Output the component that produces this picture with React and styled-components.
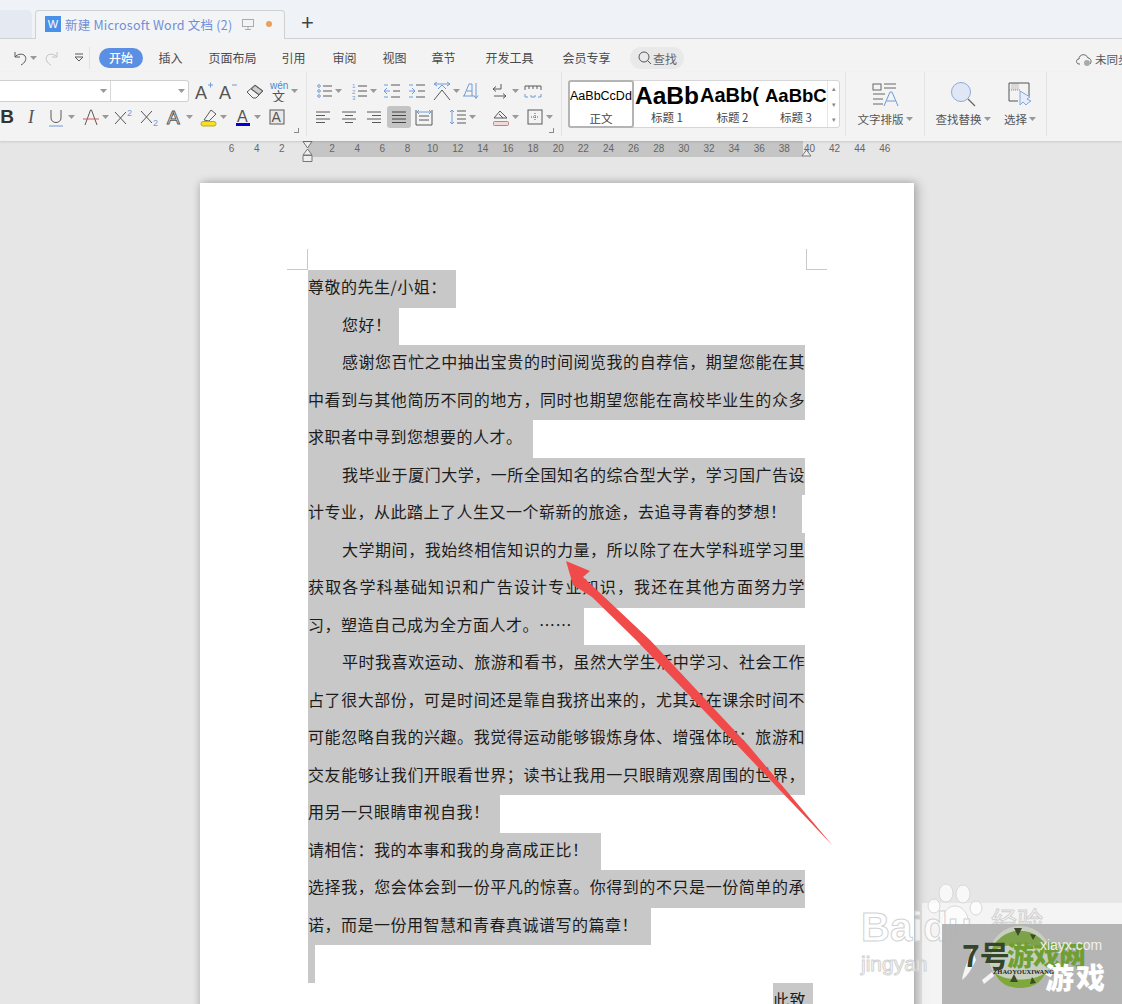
import React from "react";
import styled, { createGlobalStyle } from "styled-components";

const GlobalStyle = createGlobalStyle`
  html, body { margin: 0; padding: 0; height: 100%; overflow: hidden; }
  body { font-family: "Noto Sans CJK SC", "Liberation Sans", sans-serif; }
`;

const Window = styled.div`
  position: relative;
  width: 1122px;
  height: 1004px;
  overflow: hidden;
  background: #e6e6e6;
  display: flex;
  flex-direction: column;
`;

/* tab bar */
const TabBar = styled.div`
  height: 39px;
  flex: none;
  box-sizing: border-box;
  background: #eff2f7;
  border-bottom: 1px solid #cfd0d2;
  display: flex;
  align-items: flex-end;
`;
const OldTab = styled.div`
  width: 32px;
  height: 28px;
  background: #e4e9f2;
  border-top-right-radius: 5px;
`;
const Tab = styled.div`
  width: 250px;
  height: 29px;
  margin-left: 3px;
  margin-bottom: -1px;
  box-sizing: border-box;
  padding: 0 0 2px 9px;
  background: #f3f4f6;
  border: 1px solid #cfd0d2;
  border-bottom: none;
  border-radius: 4px 4px 0 0;
  display: flex;
  align-items: center;
`;
const WordMark = styled.div`
  width: 16px;
  height: 16px;
  background: #4a90e8;
  color: #fff;
  font: 11px/16px "Liberation Sans", sans-serif;
  text-align: center;
`;
const TabTitle = styled.span`
  margin-left: 4px;
  width: 176px;
  font-size: 12.5px;
  letter-spacing: 0.22px;
  color: #6f8fd6;
  white-space: nowrap;
`;
const Dot = styled.span`
  width: 6px;
  height: 6px;
  margin-left: 11px;
  border-radius: 50%;
  background: #e8a05c;
`;
const Plus = styled.div`
  margin-left: 16px;
  margin-bottom: 3px;
  font: 22px/24px "Liberation Sans", sans-serif;
  color: #444;
`;

/* menu bar */
const MenuBar = styled.div`
  height: 33px;
  flex: none;
  box-sizing: border-box;
  padding-top: 5px;
  background: #f3f3f3;
  display: flex;
  align-items: center;
  position: relative;
`;
const MenuItem = styled.div`
  width: ${(p) => p.$w}px;
  margin-left: ${(p) => p.$ml || 0}px;
  flex: none;
  font-size: 12px;
  line-height: 20px;
  text-align: center;
  white-space: nowrap;
  color: ${(p) => (p.$active ? "#fff" : "#4a4a4a")};
  background: ${(p) => (p.$active ? "#5a8fe4" : "transparent")};
  border-radius: 10px;
  font-weight: ${(p) => (p.$active ? 500 : 400)};
`;
const SearchPill = styled.div`
  width: 54px;
  height: 22px;
  border-radius: 11px;
  background: #e9e9e9;
  display: flex;
  align-items: center;
  justify-content: center;
  font-size: 12px;
  color: #666;
`;
const SyncState = styled.div`
  position: absolute;
  left: 1075px;
  top: 11px;
  display: flex;
  align-items: center;
  gap: 2px;
  font-size: 11.5px;
  line-height: 18px;
  color: #555;
  white-space: nowrap;
`;
const MenuSep = styled.div`
  width: 1px;
  height: 22px;
  background: #e2e2e2;
`;

/* toolbar */
const Toolbar = styled.div`
  height: 69px;
  flex: none;
  background: #f3f3f3;
  display: flex;
  box-shadow: 0 1px 2px rgba(0, 0, 0, 0.12);
  position: relative;
  z-index: 1;
`;
const Group = styled.div`
  position: relative;
  width: ${(p) => p.$w}px;
  flex: none;
  box-sizing: border-box;
  padding-top: 8px;
  border-right: 1px solid #e3e3e3;
  margin-bottom: 5px;
`;
const Row = styled.div`
  height: 22px;
  display: flex;
  align-items: center;
  margin-bottom: 4px;
`;
const Slot = styled.div`
  width: ${(p) => p.$w}px;
  height: 22px;
  flex: none;
  margin-left: ${(p) => p.$ml || 0}px;
  display: flex;
  align-items: center;
  justify-content: center;
  border-radius: 3px;
  background: ${(p) => (p.$active ? "#c4c4c4" : "transparent")};
`;
const Launcher = styled.div`
  position: absolute;
  right: 7px;
  bottom: 3px;
  width: 4px;
  height: 4px;
  border-right: 1px solid #888;
  border-bottom: 1px solid #888;
`;
const FontBox = styled.div`
  width: 189px;
  height: 22px;
  flex: none;
  box-sizing: border-box;
  background: #fff;
  border: 1px solid #d0d0d0;
  border-left: none;
  border-radius: 0 3px 3px 0;
  display: flex;
`;
const FontCell = styled.div`
  width: ${(p) => p.$w}px;
  box-sizing: border-box;
  border-right: ${(p) => (p.$line ? "1px solid #d8d8d8" : "none")};
  display: flex;
  align-items: center;
  justify-content: flex-end;
  padding-right: 3px;
`;
const Gallery = styled.div`
  margin-left: 6px;
  width: 272px;
  height: 48px;
  box-sizing: border-box;
  display: flex;
  background: #fff;
  border: 1px solid #d6d6d6;
  border-radius: 3px;
`;
const StyleCard = styled.div`
  width: ${(p) => p.$w}px;
  flex: none;
  box-sizing: border-box;
  overflow: hidden;
  border: ${(p) => (p.$active ? "2px solid #b4b4b4" : "none")};
  border-radius: 3px;
  margin: ${(p) => (p.$active ? "-1px 0 -1px -1px" : "0")};
  display: flex;
  flex-direction: column;
  align-items: center;
`;
const Sample = styled.div`
  align-self: flex-start;
  padding-left: ${(p) => p.$pad || 0}px;
  height: 29px;
  line-height: 29px;
  font-family: "Liberation Sans", sans-serif;
  font-size: ${(p) => p.$size}px;
  font-weight: ${(p) => (p.$bold ? 700 : 400)};
  color: #000;
  white-space: nowrap;
`;
const StyleName = styled.div`
  font-size: 11.5px;
  line-height: 15px;
  color: #444;
  white-space: nowrap;
`;
const Scroller = styled.div`
  margin-left: auto;
  width: 12px;
  border-left: 1px solid #e6e6e6;
  display: flex;
  flex-direction: column;
  justify-content: space-between;
  align-items: center;
  color: #888;
  font: 7px/15px "Liberation Sans", sans-serif;
`;
const BigTool = styled.div`
  width: ${(p) => p.$w}px;
  flex: none;
  display: flex;
  flex-direction: column;
  align-items: center;
`;
const BigIcon = styled.div`
  height: 30px;
  display: flex;
  align-items: center;
  margin-bottom: 1px;
`;
const BigLabel = styled.div`
  font-size: 11.5px;
  line-height: 16px;
  color: #555;
  white-space: nowrap;
  display: flex;
  align-items: center;
  gap: 2px;
`;
const BigRow = styled.div`
  display: flex;
`;
const BoldB = styled.span`
  font: 700 19px/22px "Liberation Sans", sans-serif;
  color: #333;
`;
const ItalicI = styled.span`
  font: italic 400 18px/22px "Liberation Serif", serif;
  color: #555;
`;

/* ruler */
const Ruler = styled.div`
  position: relative;
  height: 16px;
  flex: none;
  box-sizing: border-box;
  padding-left: 219px;
  display: flex;
  background: linear-gradient(
    to right,
    transparent 308px,
    #c5c5c5 308px,
    #c5c5c5 803px,
    transparent 803px
  );
`;
const Tick = styled.div`
  width: 25.14px;
  flex: none;
  text-align: center;
  font: 10px/16px "Liberation Sans", sans-serif;
  color: #666;
`;
const Marker = styled.svg`
  position: absolute;
  left: ${(p) => p.$left}px;
  top: ${(p) => p.$top}px;
`;

/* document */
const Page = styled.div`
  position: relative;
  margin: 26px 0 0 200px;
  width: 714px;
  flex: none;
  box-sizing: border-box;
  padding: 87px 0 0 108px;
  background: #fff;
  box-shadow: 0 0 8px rgba(0, 0, 0, 0.25), 6px 0 10px rgba(0, 0, 0, 0.12);
`;
const Crop = styled.div`
  position: absolute;
  left: ${(p) => p.$x}px;
  top: ${(p) => p.$y}px;
  width: ${(p) => p.$w}px;
  height: ${(p) => p.$h}px;
  background: #c9c9c9;
`;
const Line = styled.div`
  width: ${(p) => p.$w}px;
  margin-left: ${(p) => p.$ml || 0}px;
  height: 37.5px;
  box-sizing: border-box;
  padding-left: ${(p) => p.$indent || 0}px;
  background: #c8c8c8;
  font-size: 16px;
  letter-spacing: 0.5px;
  line-height: 33px;
  color: #1c1c1c;
  white-space: nowrap;
  text-align: ${(p) => (p.$justify ? "justify" : "left")};
  text-align-last: ${(p) => (p.$justify ? "justify" : "left")};
`;

/* stuff laid over the screenshot */
const Arrow = styled.svg`
  position: absolute;
  left: 0;
  top: 0;
  z-index: 3;
`;
const PaleBox = styled.div`
  position: absolute;
  left: 922px;
  top: 903px;
  width: 200px;
  height: 101px;
  background: rgba(255, 255, 255, 0.55);
  z-index: 2;
`;
const GrayBox = styled.div`
  position: absolute;
  left: 942px;
  top: 924px;
  width: 180px;
  height: 80px;
  background: rgba(178, 178, 178, 0.96);
  z-index: 2;
`;
const Paw = styled.svg`
  position: absolute;
  left: 925px;
  top: 880px;
  z-index: 2;
`;
const BaiduWord = styled.div`
  position: absolute;
  left: 861px;
  top: ${(p) => p.$top}px;
  z-index: 2;
  font-family: "Liberation Sans", sans-serif;
  font-size: ${(p) => p.$size}px;
  font-weight: ${(p) => (p.$bold ? 700 : 400)};
  line-height: 1;
  color: rgba(255, 255, 255, 0.7);
  -webkit-text-stroke: 1px #d2d2d2;
`;
const Jing = styled.div`
  position: absolute;
  left: 991px;
  top: 905px;
  z-index: 2;
  font-size: 26px;
  line-height: 30px;
  color: rgba(255, 255, 255, 0.8);
  -webkit-text-stroke: 1px #d0d0d0;
`;
const LogoMark = styled.svg`
  position: absolute;
  left: 960px;
  top: 920px;
  z-index: 5;
`;
const SevenHao = styled.div`
  position: absolute;
  left: 962px;
  top: 936px;
  z-index: 6;
  font-size: 30px;
  line-height: 36px;
  font-weight: 700;
  color: #35452c;
`;
const GreenWord = styled.div`
  position: absolute;
  left: 1007px;
  top: 940px;
  z-index: 6;
  font-size: 27px;
  line-height: 30px;
  font-weight: 900;
  letter-spacing: -1px;
  color: #6f9f33;
`;
const SiteName = styled.div`
  position: absolute;
  left: 1040px;
  top: 937px;
  z-index: 7;
  font: 14px/16px "Liberation Sans", sans-serif;
  color: #eef1ea;
`;
const SmallLatin = styled.div`
  position: absolute;
  left: 993px;
  top: 968px;
  z-index: 7;
  font: 700 6.5px/8px "Liberation Serif", serif;
  color: #222;
  white-space: nowrap;
`;
const WhiteGame = styled.div`
  position: absolute;
  left: 1045px;
  top: 959px;
  z-index: 6;
  font-size: 29px;
  line-height: 34px;
  font-weight: 900;
  letter-spacing: 2px;
  color: #fff;
`;

const Svg = ({ w = 20, h = 20, children, stroke = "#5a5a5a" }) => (
  <svg width={w} height={h} viewBox={`0 0 ${w} ${h}`} fill="none" stroke={stroke} strokeWidth="1" overflow="visible">
    {children}
  </svg>
);

const Letter = ({ x = 3, y = 17, size = 19, color = "#555" }) => (
  <text x={x} y={y} fontSize={size} fontFamily="Liberation Sans" fill={color} stroke="none">
    A
  </text>
);

const blue = "#6f9bd8";

const icons = {
  caret: (
    <svg width="7" height="4">
      <path d="M0 0h7L3.5 4z" fill="#999" />
    </svg>
  ),
  undo: (
    <Svg>
      <path d="M5 4v5h5M5 9c2-3 8-4 10-1 2 3 0 7-4 9" />
    </Svg>
  ),
  redo: (
    <Svg stroke="#c4c4c4">
      <path d="M15 4v5h-5M15 9c-2-3-8-4-10-1-2 3 0 7 4 9" />
    </Svg>
  ),
  quick: (
    <Svg>
      <path d="M6 6h8M6 9l4 4 4-4z" />
    </Svg>
  ),
  aplus: (
    <Svg>
      <Letter x={1} y={18} size={18} />
      <path d="M14 4h5M16.5 1.5v5" stroke={blue} />
    </Svg>
  ),
  aminus: (
    <Svg>
      <Letter x={1} y={18} size={18} />
      <path d="M14 4h5" stroke={blue} />
    </Svg>
  ),
  eraser: (
    <Svg>
      <path d="M2 11l8-7 8 6-7 7h-3zM6 8l8 6" />
      <path d="M6.5 8 10 4.5 17.5 10 14 13.5z" fill="#cfcfcf" />
    </Svg>
  ),
  wen: (
    <svg width="20" height="22" viewBox="0 0 20 22">
      <text x="1" y="9" fontSize="10" fill="#4a86d8" fontFamily="Liberation Sans">
        wén
      </text>
      <text x="3" y="21" fontSize="13" fill="#555" fontFamily="Noto Sans CJK SC">
        文
      </text>
    </svg>
  ),
  u: (
    <Svg>
      <path d="M5 3v8c0 6 10 6 10 0V3" />
      <path d="M3 19h14" stroke={blue} />
    </Svg>
  ),
  strike: (
    <Svg>
      <path d="M4 18 9.5 3h1L16 18" />
      <path d="M2 12h16" stroke="#d85a5a" />
    </Svg>
  ),
  sup: (
    <svg width="22" height="20">
      <path d="M2 5l11 12M13 5 2 17" stroke="#555" fill="none" />
      <text x="14" y="9" fontSize="9" fill={blue} fontFamily="Liberation Sans">
        2
      </text>
    </svg>
  ),
  sub: (
    <svg width="22" height="20">
      <path d="M2 4l11 12M13 4 2 16" stroke="#555" fill="none" />
      <text x="14" y="19" fontSize="9" fill={blue} fontFamily="Liberation Sans">
        2
      </text>
    </svg>
  ),
  outline: (
    <Svg>
      <text x="2" y="17" fontSize="19" fontFamily="Liberation Sans" fill="#fff" stroke="#555" strokeWidth=".9">
        A
      </text>
    </Svg>
  ),
  marker: (
    <Svg>
      <path d="M5 13 12 3l5 4-7 7z" />
      <rect x="2" y="14.5" width="15" height="4.5" rx="2" fill="#f5e11f" stroke="#b9a92a" />
    </Svg>
  ),
  colorA: (
    <Svg>
      <Letter x={4} y={15} size={16} />
      <rect x="3" y="16" width="14" height="3" fill="#0000d0" stroke="none" />
    </Svg>
  ),
  boxA: (
    <Svg>
      <rect x="3" y="3" width="14" height="14" fill="#e9e9e9" />
      <Letter x={4.5} y={15} size={14} />
    </Svg>
  ),
  bullets: (
    <Svg>
      <circle cx="4" cy="5" r="1.3" stroke={blue} />
      <circle cx="4" cy="10" r="1.3" stroke={blue} />
      <circle cx="4" cy="15" r="1.3" stroke={blue} />
      <path d="M8 5h9M8 10h9M8 15h9" />
    </Svg>
  ),
  numbers: (
    <svg width="20" height="20">
      <text x="2" y="7" fontSize="6" fill={blue} fontFamily="Liberation Sans">1</text>
      <text x="2" y="13" fontSize="6" fill={blue} fontFamily="Liberation Sans">2</text>
      <text x="2" y="19" fontSize="6" fill={blue} fontFamily="Liberation Sans">3</text>
      <path d="M8 5h9M8 10h9M8 15h9" stroke="#555" />
    </svg>
  ),
  outdent: (
    <Svg>
      <path d="M9 4h9M9 16h9M11 10h7" />
      <path d="M8 10H2M5 7l-3 3 3 3" stroke={blue} />
      <path d="M2 4h4M2 16h4" stroke={blue} />
    </Svg>
  ),
  indent: (
    <Svg>
      <path d="M9 4h9M9 16h9M11 10h7" />
      <path d="M2 10h6M5 7l3 3-3 3" stroke={blue} />
      <path d="M2 4h4M2 16h4" stroke={blue} />
    </Svg>
  ),
  spread: (
    <Svg>
      <path d="M2 19 10 9l8 10" />
      <path d="M2 3h16M5 1 2 3l3 2M15 1l3 2-3 2M10 4l-4 4M10 4l4 4" stroke={blue} />
    </Svg>
  ),
  sort: (
    <Svg>
      <path d="M3 15h11M4 15 9 3h3v12M6.5 10H12" stroke={blue} />
      <path d="M16 2v15M14 14.5l2 3 2-3" stroke={blue} />
    </Svg>
  ),
  enter: (
    <Svg>
      <path d="M3 8h8V3" />
      <path d="M3 8l3-2.5M3 8l3 2.5" />
      <path d="M4 15h12M13 12.5l3 2.5-3 2.5" />
    </Svg>
  ),
  tabs: (
    <Svg>
      <path d="M2 5h16M2 5v4M6 5v3M10 5v3M14 5v3M18 5v4" />
      <path d="M2 13v3h3M18 13v3h-3M8 14v2h4v-2" stroke={blue} />
    </Svg>
  ),
  left: (
    <Svg>
      <path d="M3 5h14M3 8.5h9M3 12h14M3 15.5h9" />
    </Svg>
  ),
  center: (
    <Svg>
      <path d="M3 5h14M6 8.5h8M3 12h14M6 15.5h8" />
    </Svg>
  ),
  right: (
    <Svg>
      <path d="M3 5h14M8 8.5h9M3 12h14M8 15.5h9" />
    </Svg>
  ),
  justify: (
    <Svg stroke="#444">
      <path d="M3 5h14M3 8.5h14M3 12h14M3 15.5h14" />
    </Svg>
  ),
  distribute: (
    <Svg>
      <path d="M2 3v15M18 3v15M2 18h16M5 9h10M5 13h10" />
      <path d="M3 5h14M5 3 3 5l2 2M15 3l2 2-2 2" stroke={blue} />
    </Svg>
  ),
  spacing: (
    <Svg>
      <path d="M4 3v14M2 5l2-2 2 2M2 15l2 2 2-2" stroke={blue} />
      <path d="M9 4h9M9 8h9M9 12h9M9 16h9" />
    </Svg>
  ),
  shade: (
    <Svg>
      <path d="M3 11l6-7 7 7H3zM8 7l4 4" />
      <rect x="2.5" y="14.5" width="15" height="4" rx="1" stroke="#d07a7a" fill="#efd9d9" />
    </Svg>
  ),
  borders: (
    <Svg>
      <rect x="3" y="3" width="14" height="14" />
      <path d="M10 6v8M6 10h8" strokeDasharray="1 1" />
    </Svg>
  ),
  layout: (
    <svg width="28" height="28" viewBox="0 0 28 28" fill="none" stroke="#666">
      <rect x="2" y="3" width="8" height="6" />
      <path d="M13 3h12M13 7h12M2 13h12M2 18h10M2 23h10" />
      <path d="M13 25 19 11h2l6 14M15.5 20h9" stroke={blue} />
    </svg>
  ),
  search: (
    <svg width="30" height="30" viewBox="0 0 30 30" fill="none">
      <circle cx="13" cy="12" r="9.5" fill="#dfe7f6" stroke="#8fa9d6" />
      <path d="M20 19l7 7" stroke="#666" strokeWidth="1.2" />
    </svg>
  ),
  select: (
    <svg width="26" height="28" viewBox="0 0 26 28" fill="none">
      <rect x="4" y="2" width="8" height="7" fill="#d9d9d9" />
      <path d="M13 2h9V15M11 20H2V2h11" stroke="#555" />
      <path d="M2 9h11" stroke="#888" strokeDasharray="1 1" />
      <path d="M13 10v14l3-3 3 3 2-2 3-2-4-2 3-2z" fill="#e6edf8" stroke="#86a6d6" />
    </svg>
  ),
};

const glyph = (name) => {
  if (name === "bold") return <BoldB>B</BoldB>;
  if (name === "italic") return <ItalicI>I</ItalicI>;
  return icons[name];
};

// items are [center x inside the group, icon, active?]; start is where the row is already filled to
const ToolSlots = ({ items, start = 0 }) => {
  let cursor = start;
  return items.map(([center, name, active], i) => {
    const w = name === "caret" ? 7 : active ? 24 : 20;
    const ml = center - w / 2 - cursor;
    cursor = center + w / 2;
    return (
      <Slot key={i} $w={w} $ml={ml} $active={active}>
        {glyph(name)}
      </Slot>
    );
  });
};

const rowFormat = [
  [7, "bold"], [31, "italic"], [56, "u"], [71, "caret"], [91, "strike"], [105, "caret"],
  [123, "sup"], [149, "sub"], [175, "outline"], [189, "caret"], [209, "marker"], [223, "caret"],
  [243, "colorA"], [257, "caret"], [277, "boxA"],
];
const rowFontTools = [[204, "aplus"], [228, "aminus"], [255, "eraser"], [279, "wen"], [294, "caret"]];
const rowLists = [
  [18, "bullets"], [31, "caret"], [53, "numbers"], [66, "caret"], [85, "outdent"], [110, "indent"],
  [135, "spread"], [149, "caret"], [163, "sort"], [193, "enter"], [208, "caret"], [226, "tabs"],
];
const rowAlign = [
  [16, "left"], [42, "center"], [67, "right"], [92, "justify", true], [117, "distribute"],
  [151, "spacing"], [165, "caret"], [194, "shade"], [208, "caret"], [228, "borders"], [242, "caret"],
];

const rulerNumbers = [6, 4, 2, "", 2, 4, 6, 8, 10, 12, 14, 16, 18, 20, 22, 24, 26, 28, 30, 32, 34, 36, 38, 40, 42, 44, 46];

// the letter is set with full-width punctuation
const fullWidth = (s) =>
  s.replace(/,/g, "\uFF0C").replace(/:/g, "\uFF1A").replace(/;/g, "\uFF1B").replace(/!/g, "\uFF01");

const lines = [
  { w: 148, t: "尊敬的先生/小姐:" },
  { w: 91, i: 34, t: "您好!" },
  { w: 497, i: 34, j: 1, t: "感谢您百忙之中抽出宝贵的时间阅览我的自荐信,期望您能在其" },
  { w: 497, j: 1, t: "中看到与其他简历不同的地方,同时也期望您能在高校毕业生的众多" },
  { w: 225, t: "求职者中寻到您想要的人才。" },
  { w: 497, i: 34, j: 1, t: "我毕业于厦门大学,一所全国知名的综合型大学,学习国广告设" },
  { w: 494, t: "计专业,从此踏上了人生又一个崭新的旅途,去追寻青春的梦想!" },
  { w: 497, i: 34, j: 1, t: "大学期间,我始终相信知识的力量,所以除了在大学科班学习里" },
  { w: 497, j: 1, t: "获取各学科基础知识和广告设计专业知识,我还在其他方面努力学" },
  { w: 276, t: "习,塑造自己成为全方面人才。……" },
  { w: 497, i: 34, j: 1, t: "平时我喜欢运动、旅游和看书,虽然大学生活中学习、社会工作" },
  { w: 497, j: 1, t: "占了很大部份,可是时间还是靠自我挤出来的,尤其是在课余时间不" },
  { w: 497, j: 1, t: "可能忽略自我的兴趣。我觉得运动能够锻炼身体、增强体魄;旅游和" },
  { w: 497, j: 1, t: "交友能够让我们开眼看世界;读书让我用一只眼睛观察周围的世界," },
  { w: 192, t: "用另一只眼睛审视自我!" },
  { w: 293, t: "请相信:我的本事和我的身高成正比!" },
  { w: 497, j: 1, t: "选择我,您会体会到一份平凡的惊喜。你得到的不只是一份简单的承" },
  { w: 343, t: "诺,而是一份用智慧和青春真诚谱写的篇章!" },
  { w: 7, t: "" },
  { w: 40, ml: 465, t: "此致" },
];

export default function App() {
  return (
    <Window lang="zh-CN">
      <GlobalStyle />
      <TabBar>
        <OldTab />
        <Tab>
          <WordMark>W</WordMark>
          <TabTitle>新建 Microsoft Word 文档 (2)</TabTitle>
          <svg width="14" height="14" viewBox="0 0 14 14" fill="none" stroke="#aaa">
            <rect x="1.5" y="2.5" width="11" height="7" />
            <path d="M7 10v2M4 12.5h6" />
          </svg>
          <Dot />
        </Tab>
        <Plus>+</Plus>
      </TabBar>

      <MenuBar>
        <Slot $w={20} $ml={10}>{icons.undo}</Slot>
        <Slot $w={7}>{icons.caret}</Slot>
        <Slot $w={20} $ml={5}>{icons.redo}</Slot>
        <Slot $w={20} $ml={7}>{icons.quick}</Slot>
        <MenuSep />
        <MenuItem $w={44} $ml={9} $active>开始</MenuItem>
        <MenuItem $w={55}>插入</MenuItem>
        <MenuItem $w={69}>页面布局</MenuItem>
        <MenuItem $w={53}>引用</MenuItem>
        <MenuItem $w={49}>审阅</MenuItem>
        <MenuItem $w={51}>视图</MenuItem>
        <MenuItem $w={47}>章节</MenuItem>
        <MenuItem $w={85}>开发工具</MenuItem>
        <MenuItem $w={69}>会员专享</MenuItem>
        <Slot $w={54} $ml={9}>
          <SearchPill>
            <svg width="16" height="16" viewBox="0 0 16 16" fill="none" stroke="#555">
              <circle cx="7" cy="7" r="5" />
              <path d="M10.5 10.5 14 14" />
            </svg>
            查找
          </SearchPill>
        </Slot>
        <SyncState>
          <svg width="18" height="16" viewBox="0 0 18 16" fill="none" stroke="#666">
            <path d="M5 13H4C1 13 0.5 8 4 8c0-5 7-6 9-1 3 0 4 4 2 6" />
            <circle cx="12" cy="12" r="3" fill="#aaa" stroke="none" />
          </svg>
          未同步
        </SyncState>
      </MenuBar>

      <Toolbar>
        <Group $w={307}>
          <Row>
            <FontBox>
              <FontCell $w={111} $line>{icons.caret}</FontCell>
              <FontCell $w={77}>{icons.caret}</FontCell>
            </FontBox>
            <ToolSlots items={rowFontTools} start={189} />
          </Row>
          <Row>
            <ToolSlots items={rowFormat} />
          </Row>
          <Launcher />
        </Group>
        <Group $w={255}>
          <Row>
            <ToolSlots items={rowLists} />
          </Row>
          <Row>
            <ToolSlots items={rowAlign} />
          </Row>
          <Launcher />
        </Group>
        <Group $w={284}>
          <Gallery>
            <StyleCard $w={66} $active>
              <Sample $size={12.5}>AaBbCcDd</Sample>
              <StyleName>正文</StyleName>
            </StyleCard>
            <StyleCard $w={66}>
              <Sample $size={24.5} $bold $pad={1}>AaBb</Sample>
              <StyleName>标题 1</StyleName>
            </StyleCard>
            <StyleCard $w={65}>
              <Sample $size={20} $bold>AaBb(</Sample>
              <StyleName>标题 2</StyleName>
            </StyleCard>
            <StyleCard $w={62}>
              <Sample $size={18.5} $bold>AaBbCc</Sample>
              <StyleName>标题 3</StyleName>
            </StyleCard>
            <Scroller>
              <span>▴</span>
              <span>▾</span>
              <span>▾</span>
            </Scroller>
          </Gallery>
        </Group>
        <Group $w={79}>
          <BigRow>
            <BigTool $w={78}>
              <BigIcon>{icons.layout}</BigIcon>
              <BigLabel>文字排版{icons.caret}</BigLabel>
            </BigTool>
          </BigRow>
        </Group>
        <Group $w={122}>
          <BigRow>
            <BigTool $w={76}>
              <BigIcon>{icons.search}</BigIcon>
              <BigLabel>查找替换{icons.caret}</BigLabel>
            </BigTool>
            <BigTool $w={38}>
              <BigIcon>{icons.select}</BigIcon>
              <BigLabel>选择{icons.caret}</BigLabel>
            </BigTool>
          </BigRow>
        </Group>
      </Toolbar>

      <Ruler>
        {rulerNumbers.map((n, i) => (
          <Tick key={i}>{n}</Tick>
        ))}
        <Marker $left={302} $top={0} width="11" height="22" viewBox="0 0 11 22" fill="#efefef" stroke="#777">
          <path d="M1 .5h9L5.5 7zM5.5 8 10 14H1zM1 14.5h9v6H1z" />
        </Marker>
        <Marker $left={801} $top={8} width="11" height="9" viewBox="0 0 11 9" fill="#efefef" stroke="#777">
          <path d="M5.5 1 10 7H1z" />
        </Marker>
      </Ruler>

      <Page>
        <Crop $x={87} $y={86} $w={21} $h={1} />
        <Crop $x={107} $y={66} $w={1} $h={20} />
        <Crop $x={606} $y={66} $w={1} $h={20} />
        <Crop $x={606} $y={86} $w={21} $h={1} />
        {lines.map((l, i) => (
          <Line key={i} $w={l.w} $ml={l.ml} $indent={l.i} $justify={l.j}>
            {fullWidth(l.t)}
          </Line>
        ))}
      </Page>

      <Arrow width="1122" height="1004" viewBox="0 0 1122 1004">
        <path
          d="M566 561 590 571 583 577 650 640 748 745 833 846 737 745 636 640 592 597 573 585z"
          fill="#f04a4a"
        />
      </Arrow>

      <PaleBox />
      <Paw width="62" height="60" viewBox="0 0 62 60" fill="rgba(255,255,255,.7)" stroke="#d8d8d8">
        <ellipse cx="21" cy="13" rx="7" ry="9" />
        <ellipse cx="38" cy="14" rx="7" ry="9" />
        <ellipse cx="9" cy="26" rx="6" ry="7" />
        <ellipse cx="51" cy="28" rx="6" ry="7" />
        <path d="M30 26c10 0 16 14 12 20-4 5-20 5-24 0-4-6 2-20 12-20z" />
      </Paw>
      <BaiduWord $top={907} $size={40} $bold>Baidu</BaiduWord>
      <BaiduWord $top={953} $size={21}>jingyan</BaiduWord>
      <Jing>经验</Jing>
      <GrayBox />
      <LogoMark width="100" height="80" viewBox="0 0 100 80">
        <circle cx="60" cy="37" r="31" fill="#c9cfc0" />
        <path d="M30 34a31 31 0 0 1 60 0c-10-13-48-13-60 0z" fill="#7da24a" />
        <path d="M34 52c10 10 42 10 52 0-6 14-18 16-26 16s-20-2-26-16z" fill="#7ea83c" />
        <path d="M54 8l4 8 4-8zM70 14l3 6 3-5zM50 62l4-8 4 8zM70 64l2-7 4 6z" fill="#3d4a2a" />
        <path d="M12 28c-4 14-8 20-10 32 6-4 10-12 14-20zM22 60l10-8 2 4-10 8z" fill="#f4f4f4" />
      </LogoMark>
      <SevenHao>7号</SevenHao>
      <GreenWord>游戏网</GreenWord>
      <SiteName>xiayx.com</SiteName>
      <SmallLatin>ZHAOYOUXIWANG</SmallLatin>
      <WhiteGame>游戏</WhiteGame>
    </Window>
  );
}
